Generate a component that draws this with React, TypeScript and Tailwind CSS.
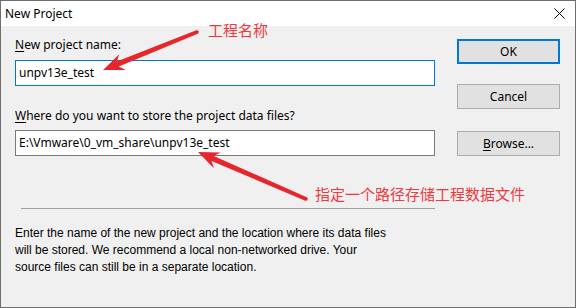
import React from 'react';

const RED = '#e7262c';

// Build a tapered arrow polygon from tail to tip
const arrowPoints = (x1: number, y1: number, x2: number, y2: number) => {
    const dx = x2 - x1;
    const dy = y2 - y1;
    const len = Math.hypot(dx, dy);
    const ux = dx / len;
    const uy = dy / len;
    const nx = -uy;
    const ny = ux;
    const headLen = 21;
    const headW = 8.5;
    const w0 = 1.8;
    const w1 = 2.7;
    const bx = x2 - ux * headLen;
    const by = y2 - uy * headLen;
    const kx = x2 - ux * (headLen - 5);
    const ky = y2 - uy * (headLen - 5);
    const pts = [
        [x1 + nx * w0, y1 + ny * w0],
        [kx + nx * w1, ky + ny * w1],
        [bx + nx * headW, by + ny * headW],
        [x2, y2],
        [bx - nx * headW, by - ny * headW],
        [kx - nx * w1, ky - ny * w1],
        [x1 - nx * w0, y1 - ny * w0],
    ];
    return pts.map(p => `${p[0].toFixed(1)},${p[1].toFixed(1)}`).join(' ');
};

const Arrow: React.FC<{ x1: number; y1: number; x2: number; y2: number }> = ({ x1, y1, x2, y2 }) => (
    <g fill={RED}>
        <polygon points={arrowPoints(x1, y1, x2, y2)} />
        <circle cx={x1} cy={y1} r={1.8} />
    </g>
);

const DlgButton: React.FC<{ children: React.ReactNode; primary?: boolean; className?: string }> = ({ children, primary, className }) => (
    <div
        className={`w-[103px] h-[25px] flex items-center justify-center bg-[#e1e1e1] leading-4 ${primary ? 'border-2 border-[#0078d7]' : 'border border-[#adadad]'} ${className ?? ''}`}
    >
        {children}
    </div>
);

export default function App() {
    return (
        <div className="relative w-[576px] h-[308px] flex flex-col bg-[#f0f0f0] border border-[#6e6e6e] text-[12px] text-black font-['Noto_Sans',sans-serif] overflow-hidden">
            {/* title bar */}
            <div className="h-[25px] shrink-0 bg-white flex items-center justify-between pl-[4px] pr-[10px]">
                <span className="leading-4">New Project</span>
                <svg width="11" height="11" viewBox="0 0 11 11">
                    <path d="M0.5 0.5 L10.5 10.5 M10.5 0.5 L0.5 10.5" stroke="#000" strokeWidth="1" />
                </svg>
            </div>

            <div className="flex flex-1">
                {/* left column */}
                <div className="w-[434px] pl-[14px] pt-[11px] flex flex-col">
                    <div className="leading-4">
                        <span className="underline underline-offset-2">N</span>ew project name:
                    </div>
                    <div className="mt-[7px] w-[420px] h-[26px] bg-white border border-[#0078d7] flex items-center pl-[3px] leading-4">
                        unpv13e_test
                    </div>

                    <div className="mt-[22px] leading-4">
                        <span className="underline underline-offset-2">W</span>here do you want to store the project data files?
                    </div>
                    <div className="mt-[6px] w-[420px] h-[26px] bg-white border border-[#7a7a7a] flex items-center pl-[3px] leading-4">
                        E:\Vmware\0_vm_share\unpv13e_test
                    </div>

                    <div className="mt-[52px] ml-[6px] w-[414px] h-px bg-[#a0a0a0]" />

                    <p className="mt-[16px] leading-[17px] whitespace-nowrap font-['Liberation_Sans',sans-serif] text-[12px]">
                        Enter the name of the new project and the location where its data files
                        <br />
                        will be stored. We recommend a local non-networked drive. Your
                        <br />
                        source files can still be in a separate location.
                    </p>
                </div>

                {/* right column */}
                <div className="ml-[22px] pt-[13px] flex flex-col">
                    <DlgButton primary>OK</DlgButton>
                    <DlgButton className="mt-[20px]">Cancel</DlgButton>
                    <DlgButton className="mt-[22px]">
                        <span>
                            <span className="underline underline-offset-2">B</span>rowse...
                        </span>
                    </DlgButton>
                </div>
            </div>

            {/* annotations */}
            <svg className="absolute -left-px -top-px pointer-events-none" width="576" height="308" viewBox="0 0 576 308">
                <Arrow x1={197} y1={32} x2={103} y2={70} />
                <Arrow x1={306} y1={199} x2={198} y2={152} />
            </svg>
            <span className="absolute left-[207px] top-[19px] text-[15px] leading-5 text-[#ee3a3f] font-['Noto_Sans_CJK_SC',sans-serif]">
                工程名称
            </span>
            <span className="absolute left-[314px] top-[183px] text-[15px] leading-5 text-[#ee3a3f] font-['Noto_Sans_CJK_SC',sans-serif]">
                指定一个路径存储工程数据文件
            </span>
        </div>
    );
}
